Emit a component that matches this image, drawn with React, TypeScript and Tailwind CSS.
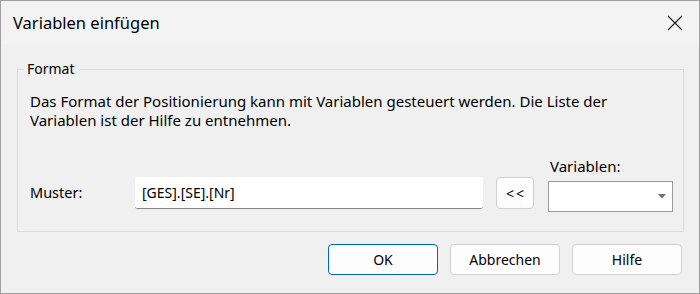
import { useState } from "react";

const font = { fontFamily: '"Noto Sans", "Liberation Sans", sans-serif' };

function DialogButton({ label, primary }: { label: string; primary?: boolean }) {
  return (
    <button
      className={`w-[110px] h-[31px] rounded-[4px] bg-[#fdfdfd] text-[14px] text-black border ${
        primary ? "border-[#0067c0]" : "border-[#d0d0d0]"
      }`}
    >
      {label}
    </button>
  );
}

export default function App() {
  const [muster, setMuster] = useState("[GES].[SE].[Nr]");

  return (
    <div
      className="w-[700px] h-[294px] flex flex-col border border-[#a0a0a0] bg-[#f0f0f0] text-black"
      style={font}
    >
      {/* title bar */}
      <div className="h-[43px] shrink-0 flex items-center justify-between bg-[#f3f3f3] pl-[12px] pr-[16px]">
        <span className="text-[16.5px] leading-[22px]">Variablen einfügen</span>
        <svg width="16" height="16" viewBox="0 0 16 16" className="mt-[1px]">
          <path d="M1 1 L15 15 M15 1 L1 15" stroke="#1a1a1a" strokeWidth="1.1" fill="none" />
        </svg>
      </div>

      {/* body */}
      <div className="flex-1 flex flex-col pl-[16px] pr-[15px] pt-[25px]">
        <div className="relative h-[163px] border border-[#dcdcdc] pt-[22px] pl-[12px]">
          <span className="absolute left-[6px] top-[-11px] px-[3px] bg-[#f0f0f0] text-[14px] leading-[19px]">
            Format
          </span>

          <p className="text-[15px] leading-[19px] w-[620px]">
            Das Format der Positionierung kann mit Variablen gesteuert werden. Die Liste der
            Variablen ist der Hilfe zu entnehmen.
          </p>

          <div className="flex items-start mt-[26px]">
            <div className="w-[105px] h-[32px] mt-[21px] flex items-center text-[14.5px]">
              Muster:
            </div>
            <input
              value={muster}
              onChange={(e) => setMuster(e.target.value)}
              className="w-[348px] h-[32px] mt-[21px] bg-white rounded-[3px] border-b border-[#868686] px-[7px] text-[14px] outline-none"
            />
            <button className="ml-[13px] mt-[21px] w-[38px] h-[32px] rounded-[4px] border border-[#d0d0d0] bg-[#fdfdfd] text-[14px] tracking-[2px] pl-[2px]">
              &lt;&lt;
            </button>
            <div className="ml-[14px] w-[125px] flex flex-col">
              <span className="h-[20px] leading-[20px] text-[15px] pl-[2px]">Variablen:</span>
              <div className="mt-[5px] h-[31px] border border-[#9a9a9a] bg-white flex items-center justify-end pr-[6px]">
                <svg width="8" height="5" viewBox="0 0 8 5">
                  <path d="M0 0 H8 L4 4.5 Z" fill="#707070" />
                </svg>
              </div>
            </div>
          </div>
        </div>

        <div className="flex justify-end gap-[12px] mt-[12px] pr-[2px]">
          <DialogButton label="OK" primary />
          <DialogButton label="Abbrechen" />
          <DialogButton label="Hilfe" />
        </div>
      </div>
    </div>
  );
}
